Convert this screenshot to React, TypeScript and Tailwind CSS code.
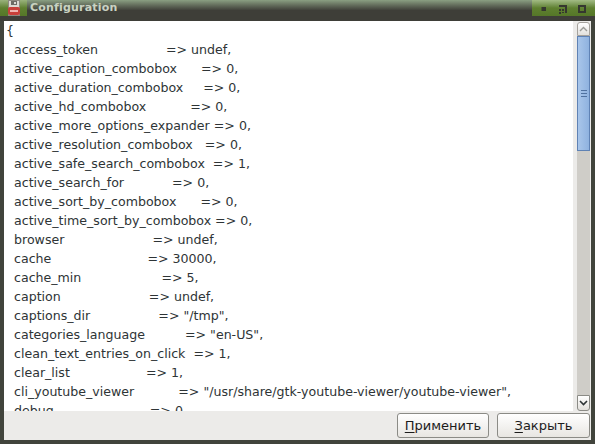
const rows: [string, string][] = [
  ["access_token", "undef"],
  ["active_caption_combobox", "0"],
  ["active_duration_combobox", "0"],
  ["active_hd_combobox", "0"],
  ["active_more_options_expander", "0"],
  ["active_resolution_combobox", "0"],
  ["active_safe_search_combobox", "1"],
  ["active_search_for", "0"],
  ["active_sort_by_combobox", "0"],
  ["active_time_sort_by_combobox", "0"],
  ["browser", "undef"],
  ["cache", "30000"],
  ["cache_min", "5"],
  ["caption", "undef"],
  ["captions_dir", '"/tmp"'],
  ["categories_language", '"en-US"'],
  ["clean_text_entries_on_click", "1"],
  ["clear_list", "1"],
  ["cli_youtube_viewer", '"/usr/share/gtk-youtube-viewer/youtube-viewer"'],
  ["debug", "0"],
];

function AppIcon() {
  return (
    <svg width="14" height="16" viewBox="0 0 14 16" className="shrink-0">
      <rect x="1.5" y="0.5" width="11" height="15" fill="#dcd8d2" stroke="#8d8880" />
      <rect x="4" y="1" width="6" height="4" fill="#6d6a64" />
      <rect x="7" y="2" width="2" height="2" fill="#dcd8d2" />
      <rect x="1" y="7" width="12" height="8" rx="2" fill="#c8403a" />
      <rect x="3" y="10" width="8" height="2" fill="#eeb5b0" />
    </svg>
  );
}

function WindowButton({ kind }: { kind: "min" | "max" | "close" }) {
  return (
    <svg width="9" height="9" viewBox="0 0 9 9" className="shrink-0">
      {kind === "min" && <rect x="1.5" y="2" width="4.5" height="4" fill="#35372f" />}
      {kind === "max" && (
        <path d="M1 0h8v8H7V2H1zM1 4h2v2H1zM4 4h2v2H4zM1 7h2v2H1zM4 7h2v1H4z" fill="#35372f" />
      )}
      {kind === "close" && (
        <path fillRule="evenodd" d="M0 0h8v8H0zM2 2v4h4V2z" fill="#35372f" />
      )}
    </svg>
  );
}

function DialogButton({ mnemonic, rest, width }: { mnemonic: string; rest: string; width: string }) {
  return (
    <button
      type="button"
      className={`${width} flex h-[25px] items-center justify-center rounded-[3px] border border-[#8b8b86] bg-gradient-to-b from-white to-[#e8e6e2] text-[13px] text-[#1c1c1c]`}
    >
      <span className="underline underline-offset-2">{mnemonic}</span>
      {rest}
    </button>
  );
}

export default function App() {
  return (
    <div className="flex h-[444px] w-[595px] flex-col overflow-hidden bg-[#41443c] font-['DejaVu_Sans',sans-serif]">
      <div className="flex h-[21px] shrink-0 items-start bg-gradient-to-b from-[#8a9f82] via-[#3e3e38] via-50% to-[#3e3e38]">
        <div className="flex h-[16px] w-[27px] items-center justify-center bg-gradient-to-b from-[#9ab37c] via-[#5f8030] to-[#557728]">
          <AppIcon />
        </div>
        <div className="ml-[3px] flex h-[17px] items-center text-[11px] font-bold tracking-[0.2px] text-[#c9d2c2]">
          Configuration
        </div>
        <div className="ml-auto flex h-[16px] w-[63px] items-start bg-gradient-to-b from-[#a3bb85] via-[#5f8030] to-[#557728] pl-[8px] pt-[5px]">
          <WindowButton kind="min" />
          <div className="ml-[9px]">
            <WindowButton kind="max" />
          </div>
          <div className="ml-[11px]">
            <WindowButton kind="close" />
          </div>
        </div>
      </div>
      <div className="mx-[4px] mb-[4px] flex min-h-0 flex-1 flex-col bg-[#ecebe9]">
        <div className="flex min-h-0 flex-1">
          <div className="min-w-0 flex-1 overflow-hidden bg-white pl-[2px] text-[12.6px] leading-[19px] text-[#2e3436]">
            <div>{"{"}</div>
            {rows.map(([key, value]) => (
              <div key={key} className="whitespace-pre">
                {"  " + key.padEnd(28) + " => " + value + ","}
              </div>
            ))}
          </div>
          <div className="flex w-[18px] shrink-0 flex-col pl-[4px] pr-[1px] pt-[1px]">
            <div className="flex h-[14px] shrink-0 items-center justify-center rounded-t-[3px] border border-[#a5a29c] bg-gradient-to-b from-white to-[#e2e0dc]">
              <svg width="9" height="6" viewBox="0 0 9 6">
                <path d="M1 5l3.5-3.5L8 5" fill="none" stroke="#9b9b96" strokeWidth="1.4" />
              </svg>
            </div>
            <div className="flex h-[115px] shrink-0 items-center justify-center border border-[#5f82b4] bg-gradient-to-r from-[#a9c6ea] to-[#8fb2df]">
              <div className="flex w-[6px] flex-col gap-[2px]">
                <div className="h-px bg-[#4f719f]" />
                <div className="h-px bg-[#4f719f]" />
                <div className="h-px bg-[#4f719f]" />
              </div>
            </div>
            <div className="flex-1 bg-[#cfcdc8]" />
            <div className="flex h-[16px] shrink-0 items-center justify-center rounded-b-[3px] border border-[#8b8b86] bg-gradient-to-b from-white to-[#e2e0dc]">
              <svg width="9" height="6" viewBox="0 0 9 6">
                <path d="M1 1l3.5 3.5L8 1" fill="none" stroke="#2e3436" strokeWidth="1.6" />
              </svg>
            </div>
          </div>
        </div>
        <div className="flex h-[29px] shrink-0 items-center justify-end gap-[8px] pr-[1px]">
          <DialogButton mnemonic="П" rest="рименить" width="w-[92px]" />
          <DialogButton mnemonic="З" rest="акрыть" width="w-[93px]" />
        </div>
      </div>
    </div>
  );
}
